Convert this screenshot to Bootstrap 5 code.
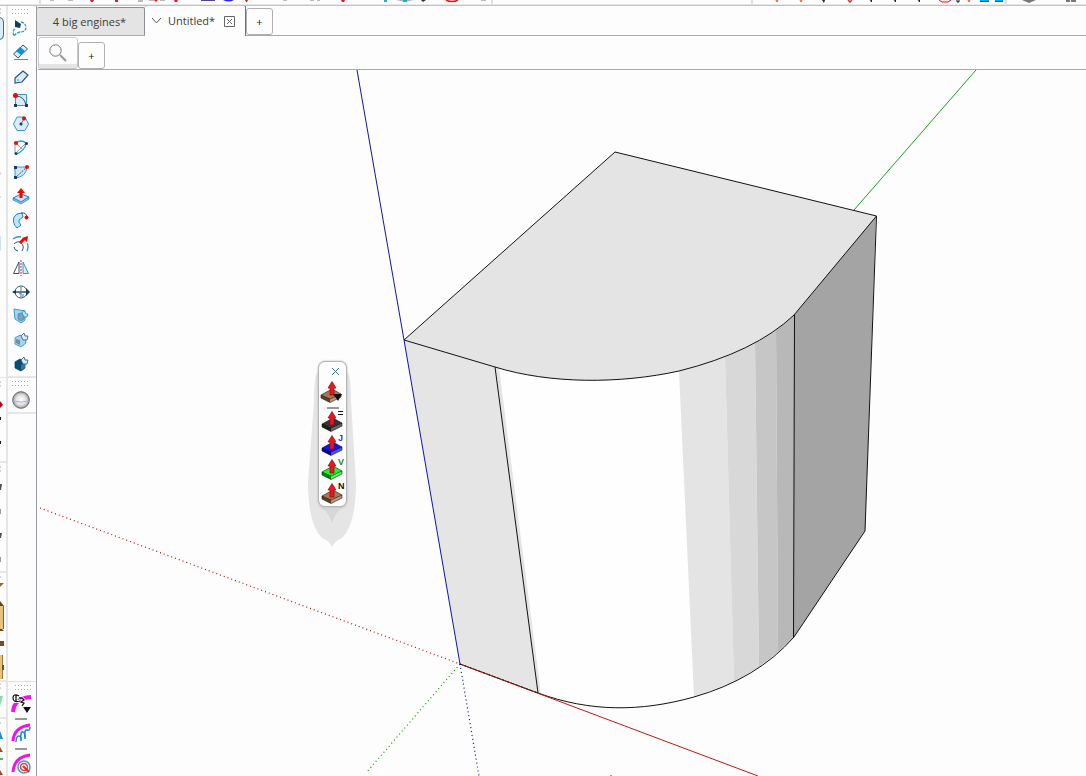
<!DOCTYPE html>
<html lang="en">
<head>
<meta charset="utf-8">
<meta name="viewport" content="width=device-width, initial-scale=1">
<title>Untitled*</title>
<link href="https://cdn.jsdelivr.net/npm/bootstrap@5.3.0/dist/css/bootstrap.min.css" rel="stylesheet">
<style>
  body { background: #fdfdfd; color: #3c3c3c; font-family: "Open Sans", "Noto Sans", sans-serif; font-size: 11px; line-height: 16px; }
  button { padding: 0; border: 0; background: transparent; color: inherit; }
  svg { display: block; }
  .top-strip { height: 6px; border-bottom: 1px solid #c3c3c3; box-shadow: inset 0 -1px #e6e6e6; }
  .edge-strip { width: 8px; border-right: 2px solid #e6e6e6; }
  .tool-strip { width: 28px; }
  .tool-group { border-bottom: 2px solid #e6e6e6; padding-left: 4px; }
  .tool-group.last-group { border-bottom: 0; border-top: 1px solid #e0e0e0; padding-left: 3px; }
  .grip { height: 10px; width: 18px; padding-top: 3px; }
  .tool { display: flex; align-items: center; width: 22px; height: 24px; }
  .split { height: 6px; width: 12px; margin-left: 4px; padding-top: 2px; }
  .split::before { content: ""; display: block; height: 2px; background: #999; }
  .work { border-left: 1px solid #9b9ba3; }
  .file-tabs { height: 30px; border-bottom: 1px solid #a9a9ad; }
  .file-tab { height: 28px; width: 108px; margin-top: 1px; background: #e4e4e4; border: 1px solid #8d8d95; border-width: 1px 1px 0 0; border-radius: 2px 2px 0 0; padding-right: 2px; }
  .file-tab.current { width: 101px; height: 31px; margin-top: -1px; padding: 0 0 0 7px; background: #fdfdfd; border-color: #707078; }
  .file-name { gap: 7px; margin-right: 9px; }
  .plus { width: 27px; height: 27px; border: 1px solid #b0b0b4; border-radius: 3px; background: #fdfdfd; color: #222; line-height: 24px; }
  .file-tabs .plus { margin-top: 2px; }
  .scene-tabs { height: 34px; border-bottom: 1px solid #a9a9ad; margin-left: 1px; }
  .finder { width: 40px; height: 32px; border: 1px solid #c9c9cc; border-radius: 3px; box-shadow: inset 0 -4px #e4e4e4; }
  .palette-float { position: absolute; left: 271px; top: 291px; width: 49px; }
  .palette-shade { position: absolute; left: 0; top: 0; }
  .palette-card { position: relative; width: 29px; margin-left: 10px; border: 1px solid #b5b5b5; border-radius: 7px; background: #fdfdfd; box-shadow: 0 0 2px #aaa; }
  .palette-card .tool { width: 26px; }
  .palette-card .split { padding-top: 3px; }
  .palette-card .close-tool { height: 18px; width: 27px; padding-left: 12px; display: flex; align-items: center; }
</style>
</head>
<body>
<svg width="0" height="0" class="position-absolute" aria-hidden="true">
  <defs>
    <pattern id="dots" width="3" height="4" patternUnits="userSpaceOnUse"><rect width="1" height="1" fill="#aaa"/></pattern>
    <radialGradient id="ball"><stop offset="0" stop-color="#fff"/><stop offset=".6" stop-color="#e2e2e2"/><stop offset="1" stop-color="#999"/></radialGradient>
    <symbol id="arrow" viewBox="0 0 10 15"><path d="M5 .5 9 7H7V14H3V7H1Z" fill="#f0141c" stroke="#801018" stroke-width=".7"/></symbol>
    <symbol id="slab" viewBox="0 0 22 15"><path d="M1 7 12 1 21 6V9L10 14.500 1 10Z"/><path d="M1 7 10 11V14.500L1 10Z" fill="#000" fill-opacity=".45"/><path d="M10 11 21 6V9L10 14.500Z" fill="#fff" fill-opacity=".25"/><path d="M1 7 12 1 21 6V9L10 14.500 1 10ZM1 7 10 11 21 6" fill="none" stroke="#111" stroke-opacity=".8" stroke-width=".7"/></symbol>
  </defs>
</svg>
<div class="d-flex flex-column vh-100 overflow-hidden">
  <header class="top-strip flex-shrink-0 overflow-hidden">
    <svg width="100%" height="4" aria-hidden="true">
      <g fill="#e0e0e0"><path d="M39 0h2v4h-2zM491 0h2v4h-2zM751 0h2v4h-2zM1005 0h2v4h-2z"/></g>
      <g fill="#e21a24"><path d="M90 0h4l-1 2h-2zM115 0h3v2h-3zM154 0h4l-2 2zM174 0h4l-1 2h-2zM245 0h3l-1 2h-1zM341 0h4l-1 2h-2z"/></g>
      <g fill="#bbb"><path d="M50 0h4v1h-4zM68 0h5v1h-5zM138 0h5v2h-5zM149 0h5v1h-5zM160 0h5v1h-5zM283 0h4v1h-4zM310 0h4v1h-4zM317 0h3v1h-3zM481 0h5v1h-5z"/></g>
      <path d="M201 0h14v1h-14z" fill="#4a45a0"/><path d="M223 0q6 3 11 0z" fill="#2626ee"/>
      <path d="M384 0h3v2h-3z" fill="#33aab8"/><path d="M396 0h18l-9 2z" fill="#aab8bb"/><path d="M403 0h4v2h-4z" fill="#14b5bd"/><path d="M421 0h5l-3 2z" fill="#333"/>
      <path d="M446 0q6 3 12 0" fill="none" stroke="#e11" stroke-width="1.500"/>
      <path d="M776 0l1 2 1-2M800 0l1 2 1-2M968 0l1 2 1-2" fill="none" stroke="#e4512d"/><path d="M848 0l2 2 2-2" fill="none" stroke="#c53a2a" stroke-width="1.500"/>
      <path d="M822 0h3l-1 3zM870 0h2v2h-1zM894 0h2v2h-1zM918 0h2v2h-1z" fill="#222"/>
      <path d="M939 0l3 2h6l3-2" fill="none" stroke="#f00"/><path d="M957 0v2h2V0" fill="none" stroke="#111"/>
      <path d="M980 0h9v1h-9zM995 0h8v1h-8z" fill="#10a8f5"/><path d="M980 1h9v1h-9zM995 1h8v1h-8z" fill="#f00"/>
      <path d="M1022 0h14l-7 3zM1066 0h4v2h-4zM1071 0h5v2h-5z" fill="#777"/>
    </svg>
  </header>
  <div class="d-flex flex-grow-1 overflow-hidden">
    <aside class="edge-strip flex-shrink-0 overflow-hidden" aria-hidden="true">
      <svg width="6" height="770">
        <g transform="translate(0 -6)">
          <path d="M-6 17.500H0Q3.500 18 3.500 22V35Q3.500 39 0 39.500H-6Z" fill="#dcebf8" stroke="#2c78a6"/>
          <path d="M0 9h1M0 13h1M0 382h1M0 386h1M0 467h1M0 471h1M0 577h1M0 684h1M0 688h1M0 723h1" stroke="#aaa"/>
          <path d="M0 461h6v2H0zM0 571h6v2H0zM0 680h6v2H0zM0 717h6v2H0zM0 377h6v1H0z" fill="#e6e6e6"/>
          <path d="M0 401 3 405 0 408Z" fill="#b40010"/><path d="M0 417h1v3H0zM0 441h1v3H0z" fill="#111"/>
          <path d="M0 172h1v3H0zM0 196h1v2H0z" fill="#ddd"/><path d="M0 236h1v15H0z" fill="#cfe4f3"/>
          <path d="M0 484h2l-1 6H0zM0 533h2l-1 5H0z" fill="#574c48"/><path d="M0 509h1v5H0zM0 557h1v5H0z" fill="#999"/>
          <path d="M0 583h4l-4 4z" fill="#9b6423"/>
          <path d="M0 601 4 606H0ZM0 627 4 631H0Z" fill="#68401c"/><path d="M0 606h4v23H0z" fill="#e7c17d"/><path d="M3 606h1v23H3z" fill="#8e6126"/>
          <path d="M0 641h4v5H0z" fill="#7a4c25"/><path d="M0 655h3v24H0z" fill="#e7c17d"/><path d="M2 655h1v24H2z" fill="#a67833"/><path d="M2 665h2v5H2z" fill="#7a4c25"/>
          <path d="M0 696h3l-3 10z" fill="#84dda9"/><path d="M0 731 3 739H0Z" fill="#188ce3"/>
          <path d="M0 747 3 752H0ZM0 770 3 775H0Z" fill="#a24b2c"/><path d="M0 758h3v2H0z" fill="#50bc60"/>
        </g>
      </svg>
    </aside>
    <nav class="tool-strip d-flex flex-column flex-shrink-0" aria-label="Tools">
      <div class="tool-group">
        <div class="grip"><svg width="18" height="5"><rect width="18" height="5" fill="url(#dots)"/></svg></div>
        <button class="tool" aria-label="Lasso"><svg width="18" height="18" fill="none"><path d="M9 3Q14 4 14 9 13 13 8 13 4 14 2 17 0 13 3 9" stroke="#2e9bd3" stroke-width="1.300" stroke-dasharray="3 1"/><path d="M3 1 9 5 8 9 3 8Z" fill="#123c60"/></svg></button>
        <button class="tool" aria-label="Eraser"><svg width="18" height="18" fill="#dbeaf5" stroke="#28577b"><path d="M1.500 11 11 2 15.500 6 6 15Z"/><path d="M4 8 8 4 13 8 9 12Z" fill="#0793dc" stroke="none"/><path d="M2 16.500H16" stroke="#2e9bd3"/></svg></button>
        <button class="tool" aria-label="Tag"><svg width="18" height="18" fill="#dbeaf5" stroke="#28577b" stroke-width="1.200"><path d="M3 11 11 4 16 8 10 15 3 16Z"/><path d="M5 13 7 13" stroke="#2e9bd3"/></svg></button>
        <button class="tool" aria-label="Rectangle"><svg width="18" height="18" fill="none"><path d="M3.500 3.500h11v11h-11z" fill="#dbeaf5" stroke="#2e9bd3"/><path d="M4 5Q12 5 14 14" stroke="#28577b"/><circle cx="3.500" cy="4.500" r="2.500" fill="#f00"/><path d="M2 13h3v3H2zM13 13h3v3h-3z" fill="#153e62"/></svg></button>
        <button class="tool" aria-label="Polygon"><svg width="18" height="18"><path d="M5 2H13L16.500 9 13 15.500H5L1.500 9Z" fill="#dbeaf5" stroke="#2e9bd3"/><path d="M9 9 12 4" stroke="#28577b" stroke-width=".7"/><circle cx="9" cy="9" r="1.500" fill="#153e62"/><circle cx="12" cy="3.500" r="2" fill="#f00"/></svg></button>
        <button class="tool" aria-label="Arc"><svg width="18" height="18" fill="none"><path d="M4 4Q9 0 14 4Q13 12 4 15" stroke="#2e9bd3" stroke-width="1.300"/><path d="M3 5V14M5 13 14 4M5 5 10 10" stroke="#557b98" stroke-width=".7"/><circle cx="4" cy="4" r="2" fill="#f00"/><circle cx="14.500" cy="4.500" r="1.500" fill="#153e62"/><circle cx="4" cy="14.500" r="1.500" fill="#153e62"/></svg></button>
        <button class="tool" aria-label="Pie"><svg width="18" height="18"><path d="M3 4H15Q14 14 3 15Z" fill="#cfe5f4" stroke="#2e9bd3"/><path d="M3 15 15 4" fill="none" stroke="#28577b" stroke-dasharray="2 1"/><circle cx="15" cy="4" r="2" fill="#f00"/><path d="M2 3h3v3H2zM2 13h3v3H2z" fill="#153e62"/></svg></button>
        <button class="tool" aria-label="Push/Pull"><svg width="18" height="18"><path d="M1 11 9 7 17 10 9 15Z" fill="#c5e3f6" stroke="#1688cb"/><path d="M1 11V13L9 17 17 12V10L9 15Z" fill="#8fcaf0" stroke="#2878a8" stroke-width=".7"/><path d="M9 1 13 6H10.500V11H7.500V6H5Z" fill="#f00"/></svg></button>
        <button class="tool" aria-label="Follow Me"><svg width="18" height="18"><path d="M10 2Q4 2 2 6 0 12 5 17L9 14Q6 11 7 9L11 6Z" fill="#c5e3f6" stroke="#1688cb"/><path d="M9 2Q14 1 15 6" fill="none" stroke="#28577b"/><circle cx="14.500" cy="6.500" r="2" fill="#f00"/></svg></button>
        <button class="tool" aria-label="Offset"><svg width="18" height="18" fill="none" stroke="#28577b"><path d="M1 4Q5 1 9 2M15 8Q17 11 15 16" stroke="#2e9bd3" stroke-width="1.300"/><path d="M2 9Q6 5 9 8Q13 11 10 16M2 12Q2 15 6 16"/><path d="M8 8 12 4" stroke="#f00" stroke-width="3"/><path d="M10 3 16 1 15 7Z" fill="#f00" stroke="none"/></svg></button>
        <button class="tool" aria-label="Flip"><svg width="18" height="18"><path d="M7 3V14.500H1.500Z" fill="#fff" stroke="#28577b"/><path d="M11 3V14.500H16.500Z" fill="#dbeaf5" stroke="#2e9bd3"/><path d="M9 1V17" stroke="#f88" stroke-width="2" stroke-dasharray="2 1"/></svg></button>
        <button class="tool" aria-label="Section plane"><svg width="18" height="18" fill="none" stroke="#28577b"><circle cx="9" cy="9" r="6"/><path d="M1 9H17" stroke-width="1.500"/><path d="M9 4V8M7 11 9 10V14M11 11V14" stroke-width=".8"/><path d="M14 5 18 9 14 13ZM4 7 0 9 4 11Z" fill="#123c60" stroke="none"/></svg></button>
        <button class="tool" aria-label="Section display"><svg width="18" height="18"><path d="M2 2 13 4V13L9 16 3 12Z" fill="#a5d4ef" stroke="#2da0db"/><path d="M6 7 9 6 12 8V12L9 14 6 12Z" fill="#7ba0b9" stroke="#4c809f" stroke-width=".7"/><path d="M10 6 12 3 14 7H16L15 10H12Z" fill="#c6e3f5" stroke="#1688cb" stroke-width=".8"/></svg></button>
        <button class="tool" aria-label="Section cuts"><svg width="18" height="18"><path d="M3 7 8 4 13 7 14 12 9 16 3 13Z" fill="#a5d4ef" stroke="#2387be" stroke-width=".8"/><path d="M4 8 8 9V14L4 12Z" fill="#778d9e"/><path d="M9 5 12 2 13 5 16 5 15 9 11 9Z" fill="#dbeaf5" stroke="#28577b" stroke-width=".8"/></svg></button>
        <button class="tool" aria-label="Section fill"><svg width="18" height="18"><path d="M3 7 8 4 13 7V13L9 16 3 13Z" fill="#074b78" stroke="#123c60" stroke-width=".8"/><path d="M9 10 13 8V13L9 15Z" fill="#2e79a8"/><path d="M9 5 12 2 13 5 16 5 15 9 11 9Z" fill="#dbeaf5" stroke="#28577b" stroke-width=".8"/></svg></button>
      </div>
      <div class="tool-group">
        <div class="grip"><svg width="18" height="5"><rect width="18" height="5" fill="url(#dots)"/></svg></div>
        <button class="tool" aria-label="Sphere"><svg width="18" height="18"><circle cx="9" cy="9" r="8.300" fill="url(#ball)" stroke="#666"/><path d="M1 10Q9 12 17 10" fill="none" stroke="#a9b0f0"/></svg></button>
      </div>
      <div class="tool-group last-group mt-auto">
        <div class="grip ms-1"><svg width="18" height="5"><rect width="18" height="5" fill="url(#dots)"/></svg></div>
        <button class="tool" aria-label="Curve settings"><svg width="22" height="22"><path d="M2 19Q3 5 20 4" fill="none" stroke="#f010f0" stroke-width="4"/><path d="M8 3Q2 0 2 5T9 8M5 2V8M8 5H11L13 7 10 9 13 10 11 13" fill="none" stroke="#fff" stroke-width="3"/><path d="M8 3Q2 0 2 5T9 8M5 2V8M8 5H11L13 7 10 9 13 10 11 13" fill="none" stroke="#111" stroke-width="1.300"/><path d="M12 14H20L16 20Z" fill="#111"/></svg></button>
        <div class="split"></div>
        <button class="tool" aria-label="Freehand curve"><svg width="22" height="22"><path d="M2 18Q3 4 19 2" fill="none" stroke="#f010f0" stroke-width="3"/><path d="M5 19Q5 13 8 13T10 18Q9 8 12 9T14 16Q13 6 16 7T19 4" fill="none" stroke="#2187cc" stroke-width="1.500"/></svg></button>
        <div class="split"></div>
        <button class="tool" aria-label="Target curve"><svg width="22" height="22"><path d="M2 19Q3 4 19 2" fill="none" stroke="#f010f0" stroke-width="3"/><circle cx="13" cy="14" r="6" fill="#fff" stroke="#4a93c0" stroke-width="1.500"/><circle cx="13" cy="14" r="3.500" fill="none" stroke="#e53a3a" stroke-width="1.500"/><path d="M12 13 18 19" stroke="#e22" stroke-width="2"/></svg></button>
      </div>
    </nav>
    <main class="work d-flex flex-column flex-grow-1">
      <div class="file-tabs d-flex flex-shrink-0">
        <button class="file-tab">4 big engines*</button>
        <div class="file-tab current d-flex align-items-center">
          <button class="file-name d-flex align-items-center" aria-label="Current file">
            <svg width="9" height="16" fill="none" stroke="#555"><path d="M0 5 4.500 10 9 5"/></svg>
            <span>Untitled*</span>
          </button>
          <button aria-label="Close"><svg width="11" height="11" fill="none" stroke="#666"><path d="M.5.5h10v10H.5z"/><path d="M3 3 8 8M8 3 3 8"/></svg></button>
        </div>
        <button class="plus" aria-label="New tab">+</button>
      </div>
      <div class="scene-tabs d-flex align-items-end flex-shrink-0">
        <button class="finder d-flex justify-content-center align-items-center" aria-label="Search scenes"><svg width="20" height="22" fill="none" stroke="#777"><circle cx="7.500" cy="8.500" r="5.700"/><path d="M12 13 18 19" stroke="#999" stroke-width="2"/></svg></button>
        <button class="plus" aria-label="Add scene">+</button>
      </div>
      <section class="position-relative flex-grow-1 overflow-hidden" aria-label="Model view">
        <svg width="100%" height="100%" class="position-absolute" aria-label="Curved solid with drawing axes">
          <g transform="translate(-37 -70)" fill="none">
            <path d="M976 70 854 210" stroke="#16a216"/>
            <path d="M404 340 495 367 538 693 460 664Z" fill="#e5e5e5"/>
            <path d="M495 367 540 377 590 380 640 378 679 371 694 697 660 705 620 708 580 705 538 693Z" fill="#fefefe"/>
            <path d="M495 367 499 368 541 694 538 693Z" fill="#e4e4e4"/>
            <path d="M679 371 725 357 734 682 694 697Z" fill="#e4e4e4"/>
            <path d="M725 357 755 343 759 667 734 682Z" fill="#d8d8d8"/>
            <path d="M755 343 776 330 778 652 759 667Z" fill="#c6c6c6"/>
            <path d="M776 330 794 315 794 637 778 652Z" fill="#b8b8b8"/>
            <path d="M794 315 876 216 865 531 794 637Z" fill="#a4a4a4"/>
            <path d="M404 340 615 152 876 216 794 315 776 330 755 343 725 357 679 371C620 384 550 384 495 367Z" fill="#e4e4e4"/>
            <path d="M495 367C550 384 620 384 679 371Q755 352 794 315L876.500 216 615 152 404 340 495 367 538 693C590 712 640 712 694 697Q757 679 794 637L865 531 876.500 216M794.500 315 793.500 637M460 664 538 693" stroke="#111"/>
            <path d="M357 70 404 340 460 664" stroke="#1212a8"/>
            <path d="M460 664 758 776" stroke="#c41616"/>
            <path d="M460 664 538 693" stroke="#222" stroke-dasharray="2 3"/>
            <path d="M40 508 460 664" stroke="#b80808" stroke-width="1.200" stroke-dasharray="1 3"/>
            <path d="M460 664 366 773" stroke="#009c00" stroke-width="1.200" stroke-dasharray="1 3"/>
            <path d="M460 664 479 776" stroke="#0808a8" stroke-width="1.200" stroke-dasharray="1 3"/>
            <path d="M610 775h2v1h-2z" fill="#999"/>
          </g>
        </svg>
        <div class="palette-float">
          <svg class="palette-shade" width="49" height="187" aria-hidden="true"><path d="M10 10Q6 14 6 40L0 122Q0 163 14 177 22 180 24 186 27 180 34 177 48 163 48 122L43 40Q43 14 39 10Z" fill="#e5e5e5"/><path d="M8 145Q20 148 24 162 28 148 40 145Z" fill="#d7d7d7"/></svg>
          <div class="palette-card">
            <button class="close-tool" aria-label="Close palette"><svg width="9" height="9" stroke="#426d97"><path d="M1 1 8 8M8 1 1 8"/></svg></button>
            <button class="tool" aria-label="Joint push pull"><svg width="26" height="24"><use href="#slab" x="1" y="8" width="22" height="15" fill="#a87850"/><use href="#arrow" x="8" y="1" width="10" height="15"/><path d="M14 14H23L19 21Z" fill="#111"/></svg></button>
            <div class="split ms-2"></div>
            <button class="tool" aria-label="Previous push pull"><svg width="26" height="24"><use href="#slab" x="2" y="7" width="22" height="15" fill="#343434"/><use href="#arrow" x="8" y="1" width="10" height="15"/><path d="M19 1.500H24M19 4.500H24" stroke="#111"/></svg></button>
            <button class="tool" aria-label="Joint"><svg width="26" height="24"><use href="#slab" x="2" y="7" width="22" height="15" fill="#1212ff"/><use href="#arrow" x="8" y="1" width="10" height="15"/><text x="19" y="7" fill="#3333dd" font-family="Liberation Sans, sans-serif" font-size="9" font-weight="bold">J</text></svg></button>
            <button class="tool" aria-label="Vector"><svg width="26" height="24"><use href="#slab" x="2" y="7" width="22" height="15" fill="#14f824"/><use href="#arrow" x="8" y="1" width="10" height="15"/><text x="19" y="7" fill="#18892d" font-family="Liberation Sans, sans-serif" font-size="9" font-weight="bold">V</text></svg></button>
            <button class="tool" aria-label="Normal"><svg width="26" height="24"><use href="#slab" x="2" y="7" width="22" height="15" fill="#a87850"/><use href="#arrow" x="8" y="1" width="10" height="15"/><text x="19" y="7" fill="#111" font-family="Liberation Sans, sans-serif" font-size="9" font-weight="bold">N</text></svg></button>
          </div>
        </div>
      </section>
    </main>
  </div>
</div>
<script src="https://cdn.jsdelivr.net/npm/bootstrap@5.3.0/dist/js/bootstrap.bundle.min.js"></script>
</body>
</html>
